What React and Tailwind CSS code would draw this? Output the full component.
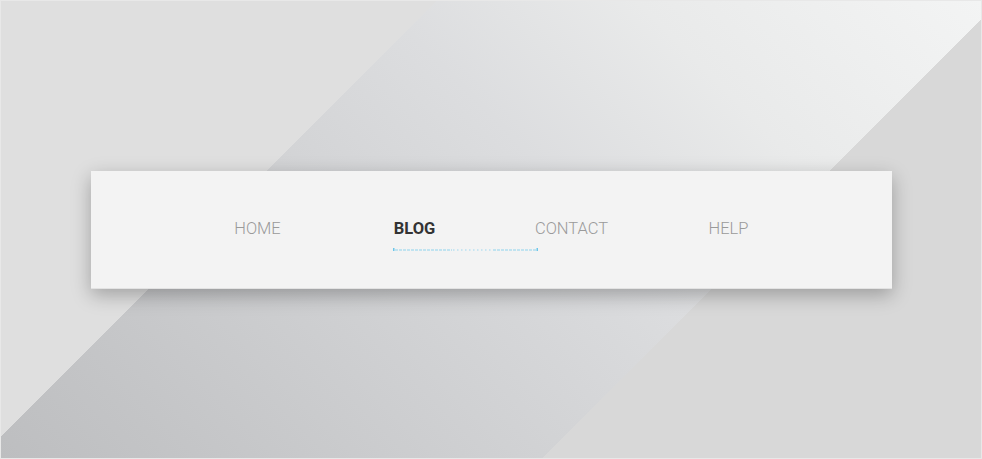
import React from "react";

const links = ["HOME", "BLOG", "CONTACT", "HELP"];

function Underline() {
    return (
        <svg width="146" height="4" viewBox="0 0 146 4" className="absolute left-[57px] top-[29px]">
            <rect x="0" y="0" width="1.5" height="3" fill="#6cc6ea" />
            <line x1="2" y1="2" x2="59" y2="2" stroke="#8ed3ee" strokeWidth="1.2" strokeDasharray="3 1" />
            <line x1="60" y1="2" x2="99" y2="2" stroke="#9dd8ef" strokeWidth="1.2" strokeDasharray="1.5 2.5" />
            <line x1="100" y1="2" x2="143" y2="2" stroke="#8ed3ee" strokeWidth="1.2" strokeDasharray="3 1" />
            <rect x="143.5" y="0" width="1.5" height="3" fill="#6cc6ea" />
        </svg>
    );
}

export default function App() {
    const active = "BLOG";

    return (
        <main
            className="w-[982px] h-[459px] flex items-center justify-center border border-[#e8e8e8] font-['Roboto',sans-serif]
            bg-[linear-gradient(135deg,#dfdfdf_0%,#dfdfdf_30.3%,transparent_30.3%,transparent_69.5%,#d8d8d8_69.5%,#d8d8d8_100%),linear-gradient(45deg,#bdbec0_0%,#c3c4c6_12%,#d1d2d4_38%,#dcdddf_58%,#e9eaea_76%,#f3f4f4_100%)]"
        >
            <nav className="w-[801px] h-[118px] bg-[#f3f3f3] border-b border-[#e2e2e2] shadow-[0_6px_18px_rgba(0,0,0,0.28)] flex items-center justify-center">
                <ul className="flex pl-[4px]">
                    {links.map((link) => (
                        <li key={link} className="relative w-[157px] flex justify-center">
                            <a
                                href="#"
                                className={
                                    link === active
                                        ? "text-[16.5px] leading-5 font-bold text-[#333333]"
                                        : "text-[16.5px] leading-5 font-light text-[#9a9a9a]"
                                }
                            >
                                {link}
                            </a>
                            {link === active && <Underline />}
                        </li>
                    ))}
                </ul>
            </nav>
        </main>
    );
}
